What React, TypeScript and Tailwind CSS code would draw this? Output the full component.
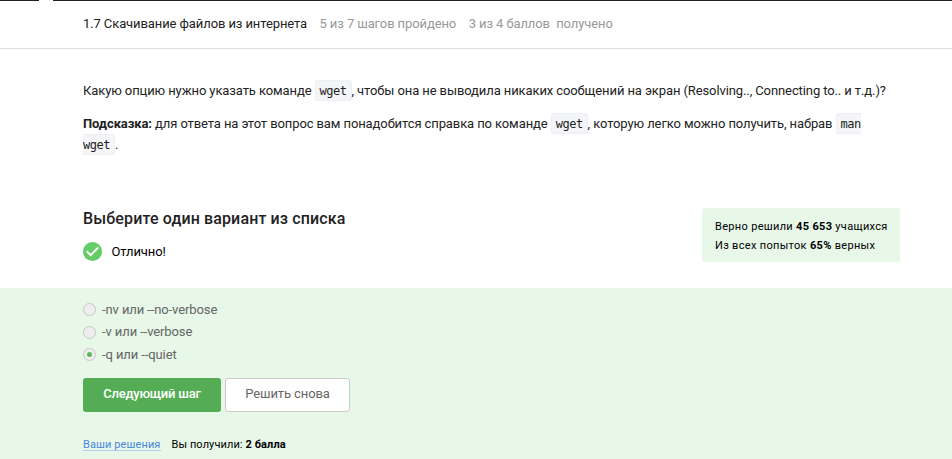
import React from "react";

function Code({ children, className = "" }: { children: React.ReactNode; className?: string }) {
  return (
    <code className={`rounded-[3px] border border-[#eeeff3] bg-[#f4f5f8] px-[4px] pt-[3px] pb-[2px] font-['DejaVu_Sans_Mono',monospace] text-[12px] leading-none tracking-[-0.5px] ${className}`}>
      {children}
    </code>
  );
}

const options = [
  { label: "-nv или --no-verbose", checked: false },
  { label: "-v или --verbose", checked: false },
  { label: "-q или --quiet", checked: true },
];

export default function App() {
  return (
    <div className="h-[459px] w-[952px] overflow-hidden bg-white font-[Roboto,sans-serif] text-[13px] tracking-[-0.1px] text-[#222]">
      <div className="flex h-px">
        <div className="w-[39px] bg-[#222]" />
        <div className="w-[14px]" />
        <div className="flex-1 bg-[#222]" />
      </div>
      <header className="flex h-[48px] items-center border-b border-[#ddd] pb-[2px] pl-[83px] whitespace-pre">
        <span>1.7 Скачивание файлов из интернета</span>
        <span className="ml-[12.5px] text-[#999]">5 из 7 шагов пройдено</span>
        <span className="ml-[12.5px] text-[#999]">3 из 4 баллов  получено</span>
      </header>
      <main>
        <div className="h-[159px] pt-[31px] pl-[83px] leading-[21px]">
          <p className="whitespace-nowrap">Какую опцию нужно указать команде <Code>wget</Code>, чтобы она не выводила никаких сообщений на экран (Resolving.., Connecting to.. и т.д.)?</p>
          <p className="mt-3 w-[800px]"><b>Подсказка:</b> для ответа на этот вопрос вам понадобится справка по команде <Code>wget</Code>, которую легко можно получить, набрав <Code>man wget</Code>.</p>
        </div>
        <div className="flex h-[80px] justify-between pr-[52px] pl-[83px]">
          <div>
            <h2 className="pt-px text-[16px] leading-5 font-medium tracking-[0.13px]">Выберите один вариант из списка</h2>
            <div className="mt-[13px] flex items-center gap-[9.5px] text-black">
              <svg width="19" height="19" viewBox="0 0 20 20"><circle cx="10" cy="10" r="10" fill="#66cc66" /><path d="M3.8 9.8l4.3 4.1 8-8.2" fill="none" stroke="white" strokeWidth="2" /></svg>
              <span>Отлично!</span>
            </div>
          </div>
          <div className="h-[54px] w-[198px] rounded-[3px] bg-[#e7f7e8] pt-[9px] pl-[13px] text-[11px] leading-[19px] tracking-[0.32px] whitespace-nowrap text-black">
            <p>Верно решили <b>45 653</b> учащихся</p>
            <p>Из всех попыток <b>65%</b> верных</p>
          </div>
        </div>
        <section className="h-[171px] bg-[#e7f7e8] pt-[10px] pl-[83px]">
          {options.map(({ label, checked }) => (
            <div key={label} className="flex h-[22.7px] items-center gap-[6px] text-[#666]">
              <span className="flex size-[13px] items-center justify-center rounded-full border border-[#c8c8c8] bg-[#eee]">{checked && <i className="size-[5px] rounded-full bg-[#5cb85c]" />}</span>
              {label}
            </div>
          ))}
          <div className="mt-[12px] flex gap-1 tracking-normal">
            <button className="h-[34px] w-[138px] rounded-[3px] bg-[#54ad54] pb-[2px] font-medium tracking-[-0.2px] text-white">Следующий шаг</button>
            <button className="h-[34px] w-[125px] rounded-[3px] border border-[#ccc] bg-white pb-[2px] tracking-[-0.1px] text-[#666]">Решить снова</button>
          </div>
          <footer className="mt-[28px] flex gap-[11px] text-[11px] leading-[10px] tracking-[0.1px] text-black"><span className="border-b border-[#b3cdf0] text-[#4a86dd]">Ваши решения</span><span>Вы получили: <b>2 балла</b></span></footer>
        </section>
      </main>
    </div>
  );
}
